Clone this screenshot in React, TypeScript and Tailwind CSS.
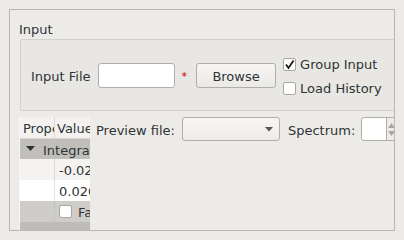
import React from "react";

function Check({ checked }: { checked?: boolean }) {
  return (
    <div className="w-[13px] h-[13px] bg-white border border-[#a9a7a3] rounded-[2px] flex items-center justify-center shrink-0">
      {checked && (
        <svg width="11" height="11" viewBox="0 0 11 11">
          <path d="M2 5.5 L4.5 9 L9.5 1.5" stroke="#1a1a1a" strokeWidth="1.8" fill="none" />
        </svg>
      )}
    </div>
  );
}

export default function App() {
  return (
    <div
      className="w-[404px] h-[240px] bg-[#edebe7] pt-[9px] pl-[9px] text-[13px] text-[#2e3436] overflow-hidden"
      style={{ fontFamily: '"DejaVu Sans", sans-serif' }}
    >
      <div className="w-[386px] h-[222px] border border-[#b9b7b3] overflow-hidden flex flex-col pl-[9px]">
        <div className="h-[29px] pt-[12px] leading-[16px]">Input</div>
        <div className="ml-[1px] w-[400px] h-[72px] shrink-0 border border-[#d3d1cd] bg-[#e9e7e3] rounded-[2px] flex items-center pl-[10px] whitespace-nowrap">
          <span className="leading-[16px] pt-[4px]">Input File</span>
          <div className="ml-[7px] w-[77px] h-[25px] shrink-0 bg-white border border-[#b0aeaa] rounded-[3px]" />
          <span className="ml-[7px] text-[#cc0000] text-[11px] leading-[12px] pt-[3px]">*</span>
          <div className="ml-[9px] w-[80px] h-[25px] shrink-0 border border-[#b0aeaa] rounded-[3px] bg-gradient-to-b from-[#f7f6f5] to-[#ebe9e6] flex items-center justify-center">
            <span className="pt-[3px]">Browse</span>
          </div>
          <div className="ml-[7px] flex flex-col gap-[8px] mt-[2px]">
            <div className="flex items-center gap-[4px] h-[16px]">
              <Check checked />
              <span className="pt-[1px]">Group Input</span>
            </div>
            <div className="flex items-center gap-[4px] h-[16px]">
              <Check />
              <span className="pt-[1px]">Load History</span>
            </div>
          </div>
        </div>
        <div className="flex mt-[6px] flex-1 min-h-0">
          <div className="w-[71px] shrink-0 flex flex-col overflow-hidden bg-white border-l border-[#f7f6f5]">
            <div className="flex h-[22px] shrink-0 bg-[#f3f2f0] border-b border-[#d8d6d2]">
              <div className="w-[35px] shrink-0 border-r border-[#d8d6d2] pl-[3px] pt-[3px] flex items-center overflow-hidden whitespace-nowrap">Property</div>
              <div className="flex-1 pl-[2px] pt-[3px] flex items-center overflow-hidden whitespace-nowrap">Value</div>
            </div>
            <div className="h-[20px] shrink-0 bg-[#c1bfbb] flex items-center whitespace-nowrap">
              <svg width="9" height="6" viewBox="0 0 9 6" className="ml-[6px] mr-[8px] shrink-0">
                <path d="M0 0 L9 0 L4.5 5 Z" fill="#2e3436" />
              </svg>
              <span className="pt-[3px]">Integration</span>
            </div>
            <div className="flex h-[21px] shrink-0 bg-[#f4f3f1]">
              <div className="w-[35px] shrink-0 border-r border-[#dcdad6]" />
              <div className="flex-1 pl-[4px] pt-[3px] flex items-center overflow-hidden whitespace-nowrap">-0.025</div>
            </div>
            <div className="flex h-[21px] shrink-0 bg-white">
              <div className="w-[35px] shrink-0 border-r border-[#e4e2de]" />
              <div className="flex-1 pl-[4px] pt-[3px] flex items-center overflow-hidden whitespace-nowrap">0.0200</div>
            </div>
            <div className="flex h-[21px] shrink-0 bg-[#cfcdc9]">
              <div className="w-[35px] shrink-0 border-r border-[#c6c4c0]" />
              <div className="flex-1 pl-[4px] flex items-center gap-[6px] overflow-hidden whitespace-nowrap">
                <Check />
                <span className="pt-[3px]">False</span>
              </div>
            </div>
            <div className="flex-1 bg-[#bebcb8]" />
          </div>
          <div className="flex items-start ml-[6px] whitespace-nowrap">
            <div className="flex items-center h-[24px] shrink-0">
              <span className="pt-[4px]">Preview file:</span>
              <div className="ml-[7px] w-[98px] h-[24px] shrink-0 border border-[#b0aeaa] rounded-[3px] bg-gradient-to-b from-[#f8f7f6] to-[#eeece9] flex items-center justify-end pr-[6px]">
                <svg width="8" height="5" viewBox="0 0 8 5">
                  <path d="M0 0 L8 0 L4 4.5 Z" fill="#555753" />
                </svg>
              </div>
              <span className="ml-[8px] pt-[4px]">Spectrum:</span>
              <div className="ml-[6px] w-[40px] h-[24px] shrink-0 border border-[#b0aeaa] rounded-[3px] bg-white flex">
                <div className="w-[25px] border-r border-[#b0aeaa]" />
                <div className="flex-1 bg-[#eeece9] flex flex-col items-start justify-center gap-[3px] pl-[1px]">
                  <svg width="7" height="5" viewBox="0 0 7 5"><path d="M0 5 L7 5 L3.5 0 Z" fill="#a9a7a3" /></svg>
                  <svg width="7" height="5" viewBox="0 0 7 5"><path d="M0 0 L7 0 L3.5 5 Z" fill="#a9a7a3" /></svg>
                </div>
              </div>
            </div>
          </div>
        </div>
      </div>
    </div>
  );
}
